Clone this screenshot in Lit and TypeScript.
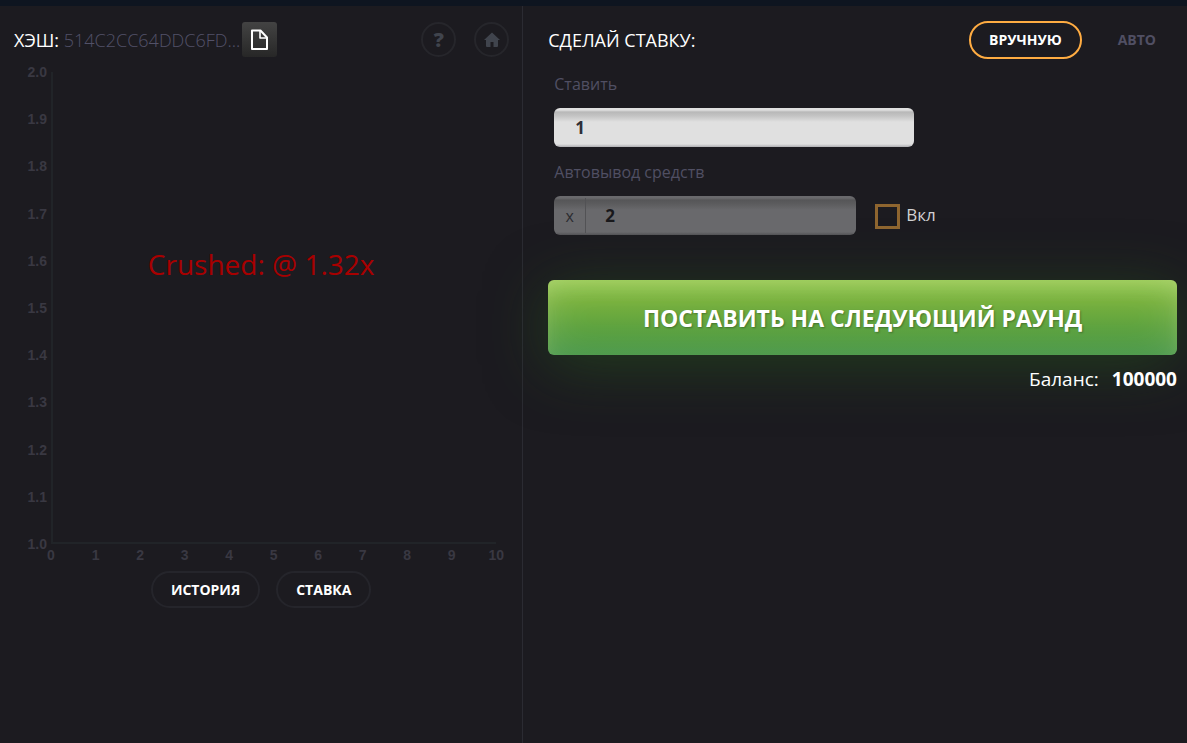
import { LitElement, html, css } from "lit";
import { customElement, state } from "lit/decorators.js";

const range = (n: number) => Array.from({ length: n }, (_, i) => i);

@customElement("crash-chart")
export class CrashChart extends LitElement {
  static styles = css`
    :host {
      display: block;
      position: relative;
    }
    .plot {
      display: grid;
      grid-template-columns: 51px 1fr;
      grid-template-rows: 1fr 20px;
      height: 492px;
      color: #393842;
      font: 700 14px/16px "Liberation Sans", Arial, sans-serif;
    }
    .y-labels {
      display: flex;
      flex-direction: column;
      justify-content: space-between;
      margin: -8px 0;
      padding-right: 4px;
      text-align: right;
    }
    .axes {
      border-left: 2px solid #212428;
      border-bottom: 2px solid #212428;
    }
    .x-labels {
      grid-column: 2;
      display: flex;
      justify-content: space-between;
      padding-top: 3px;
    }
    .x-label {
      display: flex;
      justify-content: center;
      width: 0;
    }
    .message {
      position: absolute;
      top: 35%;
      left: 0;
      right: -26px;
      margin: 0;
      text-align: center;
      color: #a80000;
      font: 400 28px/40px "Open Sans", sans-serif;
    }
  `;

  render() {
    return html`
      <div class="plot">
        <div class="y-labels">
          ${range(11).map((i) => html`<span>${(2 - i / 10).toFixed(1)}</span>`)}
        </div>
        <div class="axes"></div>
        <div class="x-labels">
          ${range(11).map((i) => html`<span class="x-label">${i}</span>`)}
        </div>
      </div>
      <p class="message">Crushed: @ 1.32x</p>
    `;
  }
}

@customElement("app-root")
export class AppRoot extends LitElement {
  static styles = css`
    :host {
      display: block;
      min-height: 100vh;
      box-sizing: border-box;
      border-top: 6px solid #0e1520;
      background: #1c1b20;
      color: #fff;
      font-family: "Open Sans", sans-serif;
    }
    * {
      box-sizing: border-box;
    }
    button,
    input {
      font-family: inherit;
      margin: 0;
    }
    button {
      cursor: pointer;
    }
    .layout {
      display: grid;
      grid-template-columns: 44fr 56fr;
      min-height: calc(100vh - 6px);
    }
    .game {
      min-width: 0;
    }
    .bar {
      display: flex;
      align-items: center;
      height: 67px;
    }
    .game .bar {
      padding: 0 13px 0 14px;
    }
    .hash {
      font-size: 18px;
      line-height: 24px;
      white-space: nowrap;
    }
    .hash-value {
      color: #525168;
      font-weight: 300;
    }
    .copy {
      display: flex;
      align-items: center;
      justify-content: center;
      width: 35px;
      height: 35px;
      margin-left: 2px;
      padding: 0;
      border: 0;
      border-radius: 3px;
      background: linear-gradient(#434343, #272727);
    }
    .round-links {
      display: flex;
      gap: 18px;
      margin-left: auto;
    }
    .round {
      display: flex;
      align-items: center;
      justify-content: center;
      width: 35px;
      height: 35px;
      border: 2px solid #26262b;
      border-radius: 50%;
      color: #40444d;
      font-size: 20px;
      font-weight: 800;
      line-height: 24px;
      text-decoration: none;
    }
    crash-chart {
      margin: -1px 26px 0 0;
    }
    .tabs {
      display: flex;
      justify-content: center;
      gap: 16px;
      margin-top: 7px;
    }
    .pill {
      height: 38px;
      padding: 0 18px;
      border: 2px solid #25252b;
      border-radius: 19px;
      background: none;
      color: #fff;
      font-size: 14px;
      font-weight: 700;
      line-height: 20px;
    }
    .tabs .pill {
      height: 37px;
    }
    .pill.active {
      border-color: #ffac42;
    }
    .pill.idle {
      border-color: transparent;
      color: #504f63;
    }
    .bet {
      min-width: 0;
      padding: 0 10px 0 25px;
      border-left: 1px solid #2b2b32;
    }
    .title {
      margin: 0;
      font-size: 18px;
      font-weight: 400;
      line-height: 24px;
    }
    .modes {
      display: flex;
      gap: 16px;
      margin-left: auto;
      padding-right: 1px;
    }
    .fields {
      margin-top: -1px;
      padding-left: 6px;
    }
    .label {
      display: block;
      margin-bottom: 12px;
      color: #504f63;
      font-size: 16px;
      font-weight: 400;
      line-height: 24px;
    }
    .field {
      display: flex;
      width: 360px;
      max-width: 100%;
      height: 39px;
      margin-bottom: 13px;
      border-radius: 6px;
      background: linear-gradient(#e0e0e0 0 2px, #b8b8b8 4px, #c4c4c4 8px, #e0e0e0 14px 36px, #aeaeb2 39px);
    }
    .input {
      flex: 1;
      min-width: 0;
      padding: 0 21px;
      border: 0;
      outline: 0;
      background: none;
      color: #2e2e36;
      font-size: 17px;
      font-weight: 700;
      line-height: 24px;
    }
    .cashout {
      display: flex;
      align-items: flex-start;
    }
    .field.off {
      width: 302px;
      background: linear-gradient(#69696c 0 2px, #565658 4px, #5c5c5e 8px, #69696c 14px 36px, #525255 39px);
    }
    .off .input {
      padding: 0 19px;
      color: #18181b;
    }
    .prefix {
      width: 32px;
      margin: 2px 0;
      border-right: 1px solid #525255;
      color: #2c2c30;
      font-size: 16px;
      line-height: 36px;
      text-align: center;
    }
    .toggle {
      display: flex;
      align-items: flex-start;
      gap: 6px;
      margin: 7px 0 0 19px;
      color: #d0d0d2;
      font-size: 17px;
      line-height: 24px;
    }
    .check {
      appearance: none;
      width: 25px;
      height: 25px;
      margin-top: 1px;
      border: 3px solid #8e652f;
    }
    .check:checked {
      background: #8e652f content-box;
      padding: 3px;
    }
    .submit {
      display: block;
      width: 100%;
      height: 75px;
      margin-top: 32px;
      padding: 0;
      border: 0;
      border-radius: 6px;
      background: linear-gradient(#8bc34a, #76b03c 30%, #419340);
      box-shadow: 0 10px 60px rgba(39, 94, 27, 0.5),
        inset 0 0 40px rgba(255, 255, 255, 0.16),
        inset 0 10px 20px -6px rgba(240, 245, 140, 0.2);
      color: #fff;
      font-size: 23px;
      font-weight: 700;
      line-height: 32px;
      text-shadow: 1px 1px 2px rgba(0, 0, 0, 0.3);
    }
    .balance {
      position: relative;
      display: flex;
      justify-content: flex-end;
      gap: 13px;
      margin: 12px 0 0;
      font-size: 19px;
      line-height: 24px;
    }
  `;

  @state() private mode: "manual" | "auto" = "manual";

  render() {
    return html`
      <main class="layout">
        <section class="game">
          <div class="bar">
            <span class="hash">ХЭШ: <span class="hash-value">514C2CC64DDC6FD...</span></span>
            <button class="copy" type="button" aria-label="Copy">
              <svg width="19" height="22" viewBox="0 0 19 22" fill="none" stroke="#fff" stroke-width="2" stroke-linejoin="round">
                <path d="M2 1.5H10.5L17 8.5V20H2Z" />
                <path d="M10 2V9H17" stroke-width="1.6" />
              </svg>
            </button>
            <nav class="round-links">
              <a class="round" href="#help">?</a>
              <a class="round" href="#home" aria-label="Home">
                <svg width="16" height="16" viewBox="0 0 16 16" fill="currentColor">
                  <path d="M8 .5 16 8H14V14Q14 15 13 15H9.500V10H6.500V15H3Q2 15 2 14V8H0Z" />
                </svg>
              </a>
            </nav>
          </div>
          <crash-chart></crash-chart>
          <div class="tabs">
            <button class="pill" type="button">ИСТОРИЯ</button>
            <button class="pill" type="button">СТАВКА</button>
          </div>
        </section>
        <section class="bet">
          <div class="bar">
            <h1 class="title">СДЕЛАЙ СТАВКУ:</h1>
            <div class="modes">
              <button class="pill ${this.mode === "manual" ? "active" : "idle"}" type="button" @click=${() => (this.mode = "manual")}>ВРУЧНУЮ</button>
              <button class="pill ${this.mode === "auto" ? "active" : "idle"}" type="button" @click=${() => (this.mode = "auto")}>АВТО</button>
            </div>
          </div>
          <div class="fields">
            <label class="label" for="stake">Ставить</label>
            <div class="field"><input class="input" id="stake" type="text" value="1" /></div>
            <label class="label" for="cashout">Автовывод средств</label>
            <div class="cashout">
              <div class="field off">
                <span class="prefix">x</span>
                <input class="input" id="cashout" type="text" value="2" readonly />
              </div>
              <label class="toggle"><input class="check" type="checkbox" />Вкл</label>
            </div>
          </div>
          <button class="submit" type="button">ПОСТАВИТЬ НА СЛЕДУЮЩИЙ РАУНД</button>
          <p class="balance"><span>Баланс:</span><strong>100000</strong></p>
        </section>
      </main>
    `;
  }
}
